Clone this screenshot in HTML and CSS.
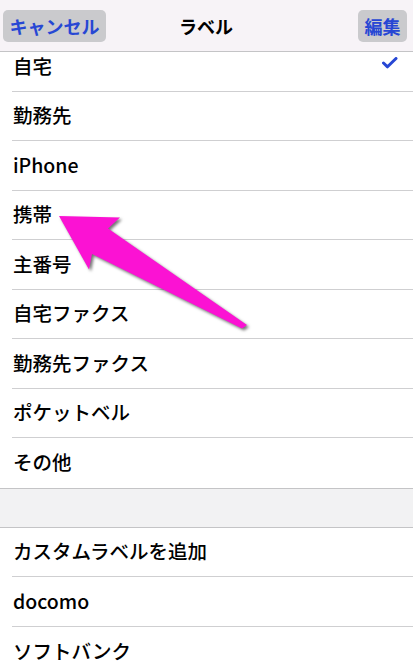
FILE: index.html
```html
<!DOCTYPE html>
<html lang="ja">
<head>
    <meta charset="UTF-8">
    <meta name="viewport" content="width=device-width, initial-scale=1.0">
    <title>ラベル</title>
    <link rel="stylesheet" href="styles.css">
</head>
<body>

<div class="screen">
    <div class="navbar">
        <div class="nav-left"><button class="nav-btn cancel">キャンセル</button></div>
        <div class="nav-title">ラベル</div>
        <div class="nav-right"><button class="nav-btn edit">編集</button></div>
    </div>

    <div class="list">
        <ul class="group">
            <li class="row">自宅
                <svg class="check" width="16" height="12" viewBox="0 0 16 12">
                    <path d="M1.5 6 L5.5 9.8 L14 1.5" fill="none" stroke="#2747d4" stroke-width="3" stroke-linecap="round" stroke-linejoin="round"/>
                </svg>
            </li>
            <li class="row">勤務先</li>
            <li class="row">iPhone</li>
            <li class="row">携帯</li>
            <li class="row">主番号</li>
            <li class="row">自宅ファクス</li>
            <li class="row">勤務先ファクス</li>
            <li class="row">ポケットベル</li>
            <li class="row last">その他</li>
        </ul>

        <div class="spacer"></div>

        <ul class="group">
            <li class="row">カスタムラベルを追加</li>
            <li class="row">docomo</li>
            <li class="row last">ソフトバンク</li>
        </ul>
    </div>

    <!-- annotation arrow -->
    <svg class="arrow" width="413" height="671" viewBox="0 0 413 671">
        <polygon points="59,216 120,217.5 108,228.5 247,325 242,328.5 92,254 89,269.5" fill="#fb12d3"/>
    </svg>
</div>

</body>
</html>
```

FILE: styles.css
```css
body {
    margin: 0;
    font-family: 'Noto Sans CJK JP', 'Noto Sans', sans-serif;
    background: #fff;
    color: #000;
}
.screen {
    position: relative;
    width: 413px;
    height: 671px;
    overflow: hidden;
    background: #fff;
}
.navbar {
    position: relative;
    z-index: 1;
    display: grid;
    grid-template-columns: 1fr auto 1fr;
    align-items: center;
    height: 51px;
    padding: 0 6px 0 3px;
    background: #f7f3f7;
    border-bottom: 1px solid #c4c4c6;
}
.nav-right {
    text-align: right;
}
.nav-btn {
    height: 32px;
    padding: 0 3px;
    border: none;
    border-radius: 5px;
    background: #cacacd;
    color: #2747d4;
    font-family: inherit;
    font-size: 18px;
    font-weight: bold;
    line-height: 32px;
}
.nav-btn.cancel {
    width: 103px;
}
.nav-btn.edit {
    width: 49px;
}
.nav-title {
    font-size: 18px;
    font-weight: bold;
    padding-left: 2px;
}
.list {
    margin-top: -10px;
}
.group {
    list-style: none;
    margin: 0;
    padding: 0;
}
.row {
    display: flex;
    align-items: center;
    justify-content: space-between;
    box-sizing: border-box;
    height: 49.5px;
    margin-left: 12px;
    padding: 0 15px 2px 1px;
    border-bottom: 1px solid #cfcfd1;
    font-size: 19.5px;
    font-weight: 500;
}
.row.last {
    border-bottom: none;
}
.check {
    margin-top: -5px;
}
.spacer {
    height: 38px;
    background: #f2f2f3;
    border-top: 1px solid #c4c4c6;
    border-bottom: 1px solid #c4c4c6;
}
.arrow {
    position: absolute;
    left: 0;
    top: 0;
    pointer-events: none;
    filter: drop-shadow(2px 2px 1.5px rgba(0, 0, 0, 0.55));
}
```
